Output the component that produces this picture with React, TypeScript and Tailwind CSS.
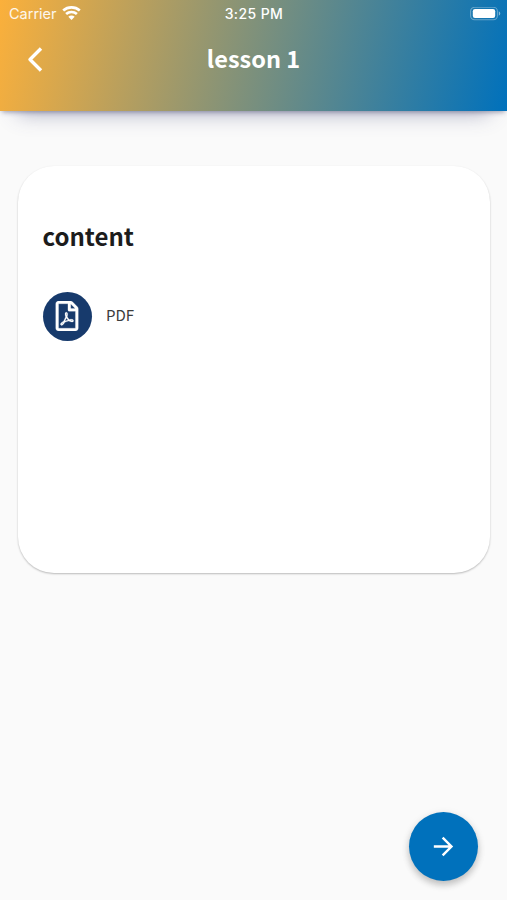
import { FaRegFilePdf } from "react-icons/fa";
import { MdArrowForward } from "react-icons/md";

function WifiIcon() {
  return (
    <svg width="19" height="15" viewBox="0 0 19 15" fill="none" stroke="white" strokeWidth="2.7">
      <path d="M1.2 4.6C6 .4 13 .4 17.8 4.6" />
      <path d="M4.1 8.1C7.2 5.3 11.8 5.3 14.9 8.1" />
      <path d="M9.5 14L6.3 10.8C8.2 9.2 10.8 9.2 12.7 10.8Z" fill="white" stroke="none" />
    </svg>
  );
}

function BatteryIcon() {
  return (
    <svg width="31" height="14" viewBox="0 0 31 14" fill="none">
      <rect x="0.6" y="0.3" width="26.8" height="12.4" rx="4" stroke="white" strokeOpacity="0.35" strokeWidth="1.1" />
      <rect x="2.8" y="2.1" width="22.4" height="8.8" rx="2.2" fill="white" />
      <path d="M28.8 4.3C30.8 5.1 30.8 7.9 28.8 8.7Z" fill="white" fillOpacity="0.5" />
    </svg>
  );
}

function StatusBar() {
  return (
    <div className="grid h-[27px] grid-cols-3 items-center pr-[6px] pl-[9px] font-['Inter',sans-serif] text-[14.5px] text-white">
      <div className="flex items-center gap-[5px]">
        <span className="text-white/90">Carrier</span>
        <WifiIcon />
      </div>
      <span className="-ml-[2px] text-center text-[14px] font-medium tracking-[0.4px]">3:25 PM</span>
      <div className="flex justify-end">
        <BatteryIcon />
      </div>
    </div>
  );
}

function Header() {
  return (
    <header className="h-[111px] bg-[linear-gradient(102.3deg,#fbb03b_0%,#0071bc_100%)] shadow-[0_20px_20px_-18px_rgba(70,75,125,0.45),0_3px_5px_-2px_rgba(40,40,80,0.45)]">
      <StatusBar />
      <div className="grid h-[65px] grid-cols-[92px_1fr_92px] items-center">
        <button aria-label="Back" className="ml-[26px] w-[17px]">
          <svg width="17" height="26" viewBox="0 0 17 26" fill="none" stroke="white" strokeWidth="3.4" strokeLinejoin="round">
            <path d="M15 1.5L4 12.5L15 23.5" />
          </svg>
        </button>
        <h1 className="pb-[2px] text-center text-[23.5px] leading-none font-bold text-white">lesson 1</h1>
      </div>
    </header>
  );
}

export default function App() {
  return (
    <div className="flex h-[900px] w-[507px] flex-col overflow-hidden bg-[#fafafa] font-['Noto_Sans_CJK_SC','Noto_Sans',sans-serif]">
      <Header />
      <main className="mr-[17px] ml-[18px] mt-[55px] h-[407px] rounded-[36px] bg-white px-[24.5px] pt-[52px] shadow-[0_1px_2px_rgba(0,0,0,0.26)]">
        <h2 className="text-[24px] leading-[36px] font-bold text-[#1c1c1c]">content</h2>
        <div className="mt-[37.5px] flex items-center gap-[14.5px]">
          <div className="flex size-[49px] items-center justify-center rounded-full bg-[#173a6c] text-white">
            <FaRegFilePdf size={30} stroke="currentColor" strokeWidth={4} />
          </div>
          <span className="pb-[2px] text-[15px] leading-[24px] text-[#3c3c3c]">PDF</span>
        </div>
      </main>
      <button
        aria-label="Next"
        className="mt-auto mr-[29px] mb-[19.5px] flex size-[69px] items-center justify-center self-end rounded-full bg-[#0071bc] text-white shadow-[0_4px_7px_rgba(0,0,0,0.2),0_2px_10px_rgba(0,0,0,0.08)]"
      >
        <MdArrowForward size={29} />
      </button>
    </div>
  );
}
